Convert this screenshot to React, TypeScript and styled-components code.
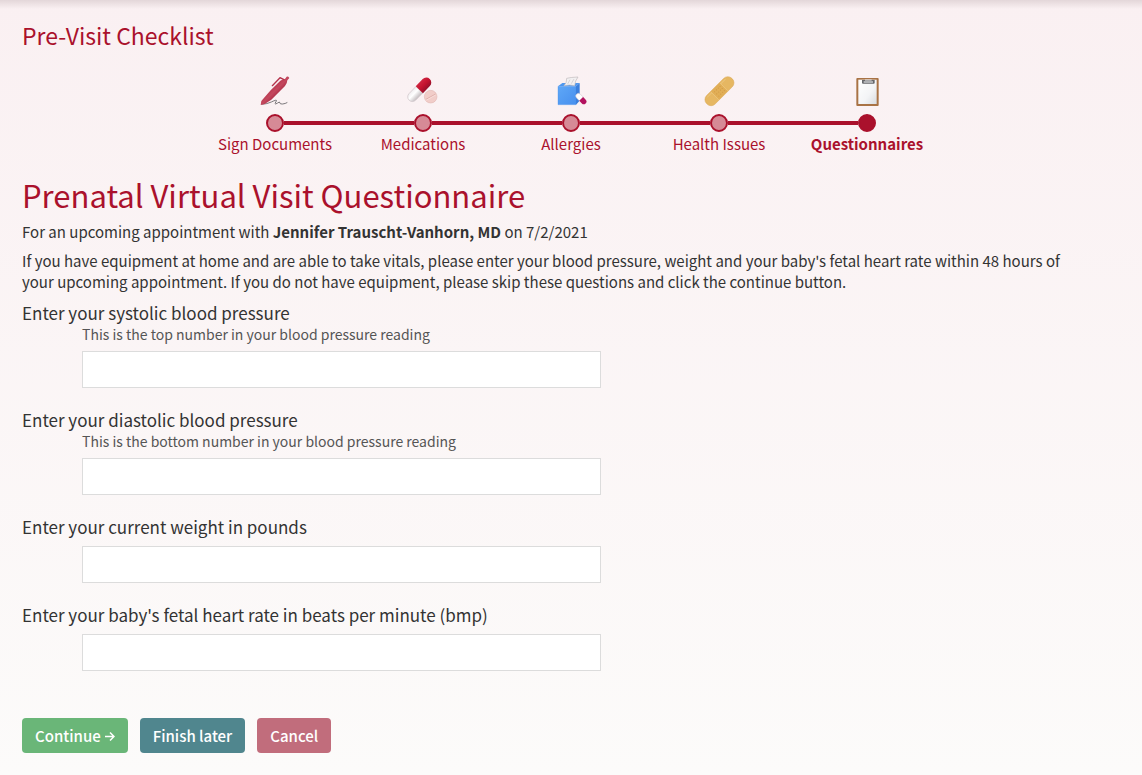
import React from "react";
import styled, { createGlobalStyle } from "styled-components";

const crimson = "#aa112c";

const GlobalStyle = createGlobalStyle`
  *, *::before, *::after { box-sizing: border-box; }
  html { min-height: 100%; background: #fcfbfa; }
  body {
    margin: 0;
    color: #333;
    font-family: "Noto Sans CJK SC", "Noto Sans", sans-serif;
    font-size: 15px;
    line-height: 21px;
  }
`;

const Page = styled.main`
  min-height: 100vh;
  padding: 21px 22px;
  background:
    linear-gradient(rgba(60, 30, 35, 0.12), rgba(60, 30, 35, 0)) top / 100% 9px no-repeat,
    linear-gradient(#faf0f2, #fcfbfa);
`;

const SectionTitle = styled.h2`
  margin: 0;
  color: ${crimson};
  font-size: 23px;
  font-weight: 400;
  line-height: 28px;
`;

const Steps = styled.ol`
  display: grid;
  grid-template-columns: repeat(5, 1fr);
  max-width: 740px;
  margin: 27px auto 0;
  padding: 0;
  list-style: none;
`;

const Step = styled.li<{ $current?: boolean }>`
  display: flex;
  flex-direction: column;
  align-items: center;
  color: ${crimson};
  font-weight: ${(p) => (p.$current ? 700 : 400)};
`;

const StepIcon = styled.svg`
  display: block;
  width: 30px;
  height: 30px;
  overflow: visible;
`;

const Track = styled.div`
  display: flex;
  align-items: center;
  width: 100%;
  margin: 8px 0 1px;
`;

const Line = styled.span<{ $hidden?: boolean }>`
  flex: 1;
  height: 4px;
  background: ${(p) => (p.$hidden ? "transparent" : crimson)};
`;

const Dot = styled.span<{ $current?: boolean }>`
  width: 18px;
  height: 18px;
  border: 2px solid ${crimson};
  border-radius: 50%;
  background: ${(p) => (p.$current ? crimson : "#d68a96")};
`;

const Heading = styled.h1`
  margin: 19px 0 0;
  color: ${crimson};
  font-size: 31px;
  font-weight: 400;
  line-height: 44px;
`;

const Paragraph = styled.p`
  margin: 4px 0 8px;
  padding-right: 40px;
`;

const Questions = styled.form`
  display: flex;
  flex-direction: column;
  gap: 20px;
  margin-top: 9px;
`;

const Question = styled.div`
  display: flex;
  flex-direction: column;
`;

const Label = styled.label`
  font-size: 17px;
  line-height: 24px;
`;

const Answer = styled.div`
  padding-left: 60px;
`;

const Hint = styled.div`
  color: #555;
  font-size: 14px;
  line-height: 19px;
`;

const TextInput = styled.input`
  display: block;
  width: 50%;
  height: 37px;
  margin-top: 7px;
  padding: 0 8px;
  border: 1px solid #dcdcdc;
  border-radius: 0;
  background: #fff;
  color: inherit;
  font: inherit;
`;

const Actions = styled.div`
  display: flex;
  gap: 12px;
  margin-top: 27px;
`;

const Button = styled.button<{ $color: string }>`
  display: flex;
  align-items: center;
  justify-content: center;
  gap: 4px;
  height: 35px;
  padding: 0 13px;
  border: 0;
  border-radius: 4px;
  background: ${(p) => p.$color};
  color: #fff;
  font-family: inherit;
  font-size: 15px;
  font-weight: 500;
  line-height: 21px;
`;

const PenIcon = () => (
  <StepIcon viewBox="0 0 90 90" aria-hidden="true">
    <defs>
      <linearGradient id="pen" x1="0" y1="0" x2="1" y2="1">
        <stop offset="0.35" stopColor="#b4314a" />
        <stop offset="0.5" stopColor="#c4485e" />
        <stop offset="0.65" stopColor="#a82842" />
      </linearGradient>
    </defs>
    <path
      d="M5 85 Q22 84 34 78 Q52 69 49 75 Q42 85 47 84 Q53 81 58 78 Q60 86 68 84 Q76 83 81 80"
      fill="none"
      stroke="#625f63"
      strokeWidth="2.5"
      strokeLinecap="round"
    />
    <path
      d="M2 87 L4 75 L32 43 L61 14 Q68 9 75 9 L80 2 Q85 1 88 6 L82 13 Q82 21 75 30 L34 71 L14 84 Z"
      fill="url(#pen)"
    />
    <path d="M37 29 L60 5 L72 11" fill="none" stroke="#b4314a" strokeWidth="4" strokeLinecap="round" strokeLinejoin="round" />
  </StepIcon>
);

const PillsIcon = () => (
  <StepIcon viewBox="0 0 90 90" aria-hidden="true">
    <defs>
      <linearGradient id="capRed" x1="0" y1="0" x2="0" y2="1">
        <stop offset="0" stopColor="#cf2540" />
        <stop offset="0.5" stopColor="#c4132f" />
        <stop offset="1" stopColor="#96102a" />
      </linearGradient>
      <linearGradient id="capWhite" x1="0" y1="0" x2="0" y2="1">
        <stop offset="0" stopColor="#f1eef0" />
        <stop offset="0.4" stopColor="#ffffff" />
        <stop offset="1" stopColor="#c4bdc0" />
      </linearGradient>
    </defs>
    <g transform="rotate(-46 34 41)">
      <path d="M34 27 H4 A14 14 0 0 0 4 55 H34 Z" fill="url(#capWhite)" stroke="#cdc4c8" strokeWidth="2" />
      <path d="M34 26 H64 A15 15 0 0 1 64 56 H34 Z" fill="url(#capRed)" />
    </g>
    <circle cx="68" cy="62" r="19" fill="#f1cdc9" stroke="#dcb0ac" strokeWidth="1.5" />
    <path d="M54 70 L83 54" stroke="#dcaaa6" strokeWidth="2.5" />
    <path d="M54 73 L83 57" stroke="#fae5e2" strokeWidth="2" />
  </StepIcon>
);

const TissueIcon = () => (
  <StepIcon viewBox="0 0 90 90" aria-hidden="true">
    <defs>
      <linearGradient id="box" x1="0" y1="0" x2="1" y2="1">
        <stop offset="0" stopColor="#5ea7f7" />
        <stop offset="1" stopColor="#4890ee" />
      </linearGradient>
    </defs>
    <path d="M6 31 L19 21 H71 L60 31 Z" fill="#4f98ef" />
    <path d="M6 31 H60 V86 H6 Z" fill="url(#box)" stroke="#4790ea" strokeWidth="1" />
    <path d="M60 31 L71 21 V74 L60 86 Z" fill="#3b7fdc" />
    <path d="M24 29 Q33 20 32 7 Q42 4 66 3 Q57 14 56 29 Q40 25 24 29 Z" fill="#f2f0f1" stroke="#bfb9bd" strokeWidth="2" />
    <path d="M35 24 L42 11 M46 23 L54 9" stroke="#d3ced1" strokeWidth="2.5" />
    <g transform="rotate(46 75 68)">
      <path d="M76 60 H64 A8 8 0 0 0 64 76 H76 Z" fill="#fff" stroke="#cbbfc8" strokeWidth="1.5" />
      <path d="M76 60 H87 A8 8 0 0 1 87 76 H76 Z" fill="#b3115e" />
    </g>
  </StepIcon>
);

const BandageIcon = () => (
  <StepIcon viewBox="0 0 90 90" aria-hidden="true">
    <g transform="rotate(-45 46 46)">
      <rect x="-7" y="28" width="107" height="36" rx="17" fill="#e6b762" stroke="#d9a650" strokeWidth="1.5" />
      <path d="M9 33 H84" stroke="#ebc377" strokeWidth="3" strokeLinecap="round" />
      <rect x="27" y="29" width="38" height="34" fill="#e1ae56" />
      <path d="M27 29 V63 M65 29 V63" stroke="#eec985" strokeWidth="2" />
      <g fill="#cf9744">
        {[35, 43, 51, 58].map((x) =>
          [37, 46, 55].map((y) => <circle key={`${x}-${y}`} cx={x} cy={y} r="1.6" />)
        )}
      </g>
    </g>
  </StepIcon>
);

const ClipboardIcon = () => (
  <StepIcon viewBox="0 0 90 90" aria-hidden="true">
    <defs>
      <linearGradient id="paper" x1="0" y1="0" x2="1" y2="1">
        <stop offset="0" stopColor="#ffffff" />
        <stop offset="0.6" stopColor="#f3f4f6" />
        <stop offset="1" stopColor="#d9dce0" />
      </linearGradient>
    </defs>
    <rect x="13" y="6" width="67" height="84" rx="3" fill="#a97345" />
    <rect x="19" y="11" width="55" height="73" fill="url(#paper)" />
    <path d="M30 12 H68 V20 Q68 23 65 23 H33 Q30 23 30 20 Z" fill="#66676b" />
    <path d="M35 16 H63 V20 H35 Z" fill="#d4d5d8" />
    <path d="M39 12 H59" stroke="#e6e7ea" strokeWidth="3" />
  </StepIcon>
);

const ArrowIcon = () => (
  <svg width="10" height="11" viewBox="0 0 10 11" fill="none" stroke="#fff" strokeWidth="1.5" aria-hidden="true">
    <path d="M0 6.5 H9 M5 2.5 L9 6.5 L5 10.5" />
  </svg>
);

const steps = [
  { name: "Sign Documents", Icon: PenIcon },
  { name: "Medications", Icon: PillsIcon },
  { name: "Allergies", Icon: TissueIcon },
  { name: "Health Issues", Icon: BandageIcon },
  { name: "Questionnaires", Icon: ClipboardIcon },
];

const questions = [
  {
    id: "systolic",
    text: "Enter your systolic blood pressure",
    hint: "This is the top number in your blood pressure reading",
  },
  {
    id: "diastolic",
    text: "Enter your diastolic blood pressure",
    hint: "This is the bottom number in your blood pressure reading",
  },
  { id: "weight", text: "Enter your current weight in pounds" },
  { id: "heart-rate", text: "Enter your baby's fetal heart rate in beats per minute (bmp)" },
];

export default function App() {
  const last = steps.length - 1;
  return (
    <>
      <GlobalStyle />
      <Page>
        <SectionTitle>Pre-Visit Checklist</SectionTitle>
        <Steps>
          {steps.map(({ name, Icon }, i) => (
            <Step key={name} $current={i === last} aria-current={i === last ? "step" : undefined}>
              <Icon />
              <Track>
                <Line $hidden={i === 0} />
                <Dot $current={i === last} />
                <Line $hidden={i === last} />
              </Track>
              {name}
            </Step>
          ))}
        </Steps>
        <Heading>Prenatal Virtual Visit Questionnaire</Heading>
        <Paragraph>
          For an upcoming appointment with <strong>Jennifer Trauscht-Vanhorn, MD</strong> on 7/2/2021
        </Paragraph>
        <Paragraph>
          If you have equipment at home and are able to take vitals, please enter your blood pressure, weight and your
          baby's fetal heart rate within 48 hours of your upcoming appointment. If you do not have equipment, please
          skip these questions and click the continue button.
        </Paragraph>
        <Questions onSubmit={(e) => e.preventDefault()}>
          {questions.map(({ id, text, hint }) => (
            <Question key={id}>
              <Label htmlFor={id}>{text}</Label>
              <Answer>
                {hint && <Hint id={`${id}-hint`}>{hint}</Hint>}
                <TextInput id={id} type="text" aria-describedby={hint ? `${id}-hint` : undefined} />
              </Answer>
            </Question>
          ))}
          <Actions>
            <Button type="submit" $color="#6ab678">
              Continue
              <ArrowIcon />
            </Button>
            <Button type="button" $color="#50868e">
              Finish later
            </Button>
            <Button type="button" $color="#c16d7c">
              Cancel
            </Button>
          </Actions>
        </Questions>
      </Page>
    </>
  );
}
